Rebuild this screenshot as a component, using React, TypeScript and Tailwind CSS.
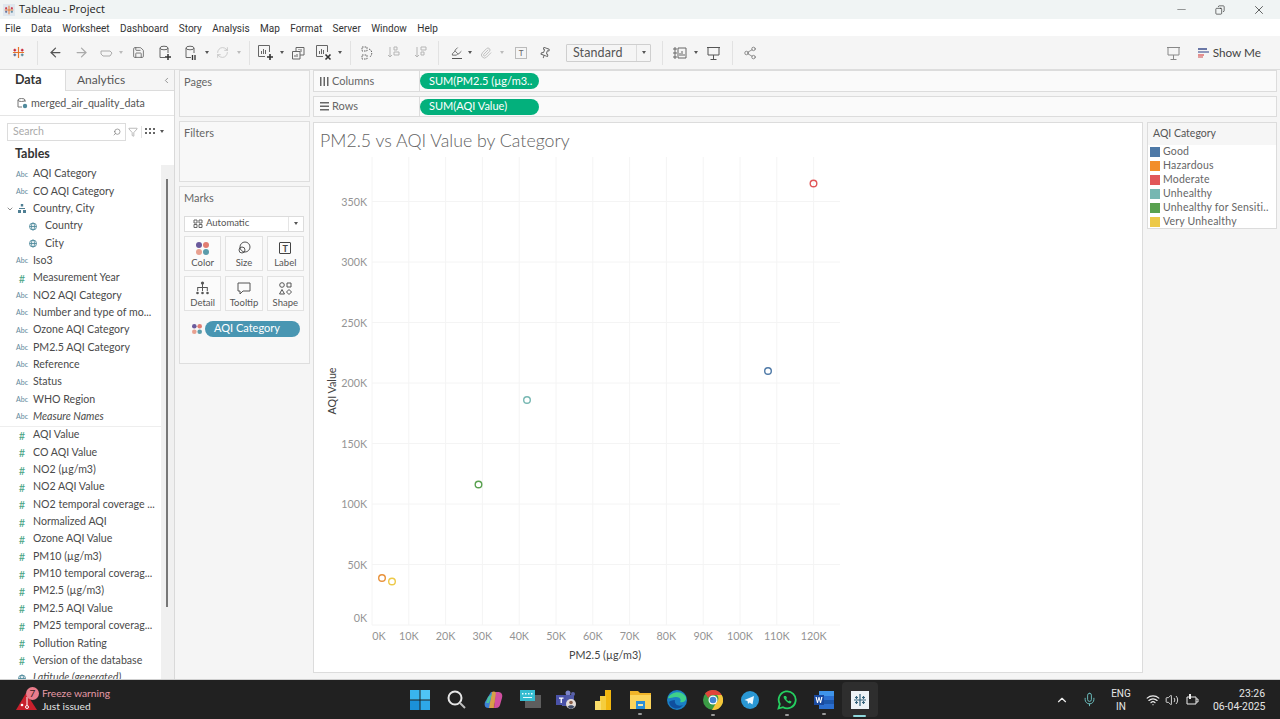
import React from "react";
import { Search, Filter, ChevronLeft, ChevronDown, ChevronUp, ArrowLeft, ArrowRight, Minus, X, Copy, Mic, Wifi, Volume2, Paperclip, Pin, Highlighter, Share2, RefreshCw, Save } from "lucide-react";

type Field = { name: string; kind: "abc" | "num" | "geo" | "hier"; indent?: boolean; italic?: boolean; caret?: boolean };

const dimensions: Field[] = [
  { name: "AQI Category", kind: "abc" },
  { name: "CO AQI Category", kind: "abc" },
  { name: "Country, City", kind: "hier", caret: true },
  { name: "Country", kind: "geo", indent: true },
  { name: "City", kind: "geo", indent: true },
  { name: "Iso3", kind: "abc" },
  { name: "Measurement Year", kind: "num" },
  { name: "NO2 AQI Category", kind: "abc" },
  { name: "Number and type of mo...", kind: "abc" },
  { name: "Ozone AQI Category", kind: "abc" },
  { name: "PM2.5 AQI Category", kind: "abc" },
  { name: "Reference", kind: "abc" },
  { name: "Status", kind: "abc" },
  { name: "WHO Region", kind: "abc" },
  { name: "Measure Names", kind: "abc", italic: true },
];

const measures: Field[] = [
  { name: "AQI Value", kind: "num" },
  { name: "CO AQI Value", kind: "num" },
  { name: "NO2 (µg/m3)", kind: "num" },
  { name: "NO2 AQI Value", kind: "num" },
  { name: "NO2 temporal coverage ...", kind: "num" },
  { name: "Normalized AQI", kind: "num" },
  { name: "Ozone AQI Value", kind: "num" },
  { name: "PM10 (µg/m3)", kind: "num" },
  { name: "PM10 temporal coverag...", kind: "num" },
  { name: "PM2.5 (µg/m3)", kind: "num" },
  { name: "PM2.5 AQI Value", kind: "num" },
  { name: "PM25 temporal coverag...", kind: "num" },
  { name: "Pollution Rating", kind: "num" },
  { name: "Version of the database", kind: "num" },
  { name: "Latitude (generated)", kind: "geo", italic: true },
];

const menus = ["File", "Data", "Worksheet", "Dashboard", "Story", "Analysis", "Map", "Format", "Server", "Window", "Help"];

const legend = [
  { name: "Good", color: "bg-[#4e79a7]" },
  { name: "Hazardous", color: "bg-[#f28e2b]" },
  { name: "Moderate", color: "bg-[#e15759]" },
  { name: "Unhealthy", color: "bg-[#76b7b2]" },
  { name: "Unhealthy for Sensiti..", color: "bg-[#59a14f]" },
  { name: "Very Unhealthy", color: "bg-[#edc948]" },
];

const marks = [
  { x: 768, y: 371, c: "#4e79a7" },
  { x: 382, y: 578, c: "#e8913a" },
  { x: 813.5, y: 183.5, c: "#e15759" },
  { x: 527, y: 400, c: "#76b7b2" },
  { x: 478.5, y: 484.5, c: "#59a14f" },
  { x: 392, y: 581.5, c: "#edc948" },
];

function FieldIcon({ kind }: { kind: Field["kind"] }) {
  if (kind === "abc") return <span className="text-[7px] leading-none text-[#5f8a9c] w-[14px] text-center">Abc</span>;
  if (kind === "num") return <span className="text-[11px] leading-none text-[#4aa585] w-[14px] text-center">#</span>;
  if (kind === "geo")
    return (
      <svg width="14" height="9" viewBox="0 0 14 9" fill="none" stroke="#4f8a9c" strokeWidth="0.9">
        <circle cx="7" cy="4.5" r="3.5" />
        <ellipse cx="7" cy="4.5" rx="1.5" ry="3.5" />
        <path d="M3.5 4.5h7" />
      </svg>
    );
  return (
    <svg width="14" height="9" viewBox="0 0 14 9" fill="#4f7f94">
      <path d="M5.8 0h2.4v2.5H5.8zM3 6h3v3H3zM8 6h3v3H8zM4 4h6v1H4z" />
    </svg>
  );
}

function FieldRow({ f }: { f: Field }) {
  return (
    <div className={`flex items-center h-[17.35px] whitespace-nowrap ${f.indent ? "pl-[26px]" : "pl-[15px]"}`}>
      {f.caret && <ChevronDown size={8} className="text-[#555] -ml-[9px] mr-[1px]" />}
      <FieldIcon kind={f.kind} />
      <span className={`${f.indent ? "ml-[5px]" : "ml-[4px]"} text-[10.6px] text-[#4a4a4a] ${f.italic ? "italic" : ""}`}>{f.name}</span>
    </div>
  );
}

function Caret({ off }: { off?: boolean }) {
  return <span className={`w-0 h-0 border-x-[2.5px] border-x-transparent border-t-[3px] ${off ? "border-t-[#bbb]" : "border-t-[#555]"}`} />;
}

function BarsIcon({ extra }: { extra: "plus" | "x" }) {
  return (
    <svg width="17" height="17" viewBox="0 0 17 17" fill="none" stroke="#666" strokeWidth="1">
      <path d="M12.5 8V1.5h-11v11H8" />
      <path d="M4.5 10V7M6.5 10V5M8.5 10V6" />
      {extra === "plus" ? <path d="M13 10v6M10 13h6" stroke="#333" strokeWidth="1.6" /> : <path d="M10.5 10.5l5 5M15.5 10.5l-5 5" stroke="#333" strokeWidth="1.6" />}
    </svg>
  );
}

function Cylinder({ extra }: { extra: "plus" | "pause" }) {
  return (
    <svg width="14" height="16" viewBox="0 0 14 16" fill="none" stroke="#666" strokeWidth="1">
      <ellipse cx="6" cy="3" rx="4" ry="1.8" />
      <path d="M2 3v9.5h5M10 3v5" />
      {extra === "plus" ? <path d="M10 9v6M7 12h6" stroke="#333" strokeWidth="1.5" /> : <path d="M8.5 10v5M11 10v5" stroke="#333" strokeWidth="1.3" />}
    </svg>
  );
}

function Screen({ stroke, className }: { stroke: string; className: string }) {
  return (
    <svg width="15" height="14" viewBox="0 0 15 14" fill="none" stroke={stroke} className={className}>
      <path d="M1 1.500h13M2 1.500v7.500h11V1.500M7.500 9v4M4.500 13.500h6" />
    </svg>
  );
}

function TableauLogo({ size = 13 }: { size?: number }) {
  return (
    <svg width={size} height={size} viewBox="0 0 14 14" fill="none" strokeWidth="1.3">
      <path d="M7 1v12M1 7h12" stroke="#e8762b" />
      <path d="M3 3v3M1.5 4.5h3M11 3v3M9.5 4.5h3" stroke="#c72035" />
      <path d="M3 8v3M1.5 9.5h3" stroke="#5b6591" />
      <path d="M11 8v3M9.5 9.5h3" stroke="#59879b" />
    </svg>
  );
}

function Toolbar() {
  return (
    <div className="flex items-center h-[34px] bg-[#f5f5f5] shrink-0 border-b border-[#dddddd] text-[#666]">
      <div className="ml-[12px] w-[13px] flex justify-center"><TableauLogo /></div>
      <div className="ml-[12px] w-px h-[24px] bg-[#e2e2e2]" />
      <ArrowLeft size={15} className="ml-[10px] text-[#555]" />
      <ArrowRight size={15} className="ml-[11px] text-[#aaa]" />
      <svg width="13" height="8" viewBox="0 0 13 8" fill="none" stroke="#aaa" className="ml-[11px]"><path d="M1 2h9l2 2-2 3H3L1 5z" /></svg>
      <span className="ml-[6px] flex"><Caret off /></span>
      <Save size={13} className="ml-[9px] text-[#555]" strokeWidth={1.4} />
      <span className="ml-[13px] flex"><Cylinder extra="plus" /></span>
      <span className="ml-[12px] flex"><Cylinder extra="pause" /></span>
      <span className="ml-[7px] flex"><Caret /></span>
      <RefreshCw size={13} className="ml-[7px] text-[#bbb]" strokeWidth={1.3} />
      <span className="ml-[8px] flex"><Caret off /></span>
      <div className="ml-[8px] w-px h-[24px] bg-[#e2e2e2]" />
      <span className="ml-[7px] flex"><BarsIcon extra="plus" /></span>
      <span className="ml-[6px] flex"><Caret /></span>
      <svg width="14" height="14" viewBox="0 0 14 14" fill="none" stroke="#666" className="ml-[7px]"><path d="M5 5V1.5h8V9H9M1.5 5.5H9V13H1.5z" /><path d="M4 11V9M6 11V8M8 4V3M10 6V3" /></svg>
      <span className="ml-[10px] flex"><BarsIcon extra="x" /></span>
      <span className="ml-[6px] flex"><Caret /></span>
      <div className="ml-[8px] w-px h-[24px] bg-[#e2e2e2]" />
      <svg width="13" height="14" viewBox="0 0 13 14" fill="none" stroke="#666" strokeDasharray="1.6 1" className="ml-[10px]"><path d="M1 1h5v4H1zM1 9h5v4H1zM8 3c3 1 4 5 1 8" /></svg>
      <svg width="13" height="13" viewBox="0 0 13 13" fill="none" stroke="#b5b5b5" className="ml-[13px]"><path d="M3 1v10M1 9l2 2 2-2M7 1h3v3H7zM7 6h5v3H7z" /></svg>
      <svg width="13" height="13" viewBox="0 0 13 13" fill="none" stroke="#b5b5b5" className="ml-[14px]"><path d="M3 1v10M1 9l2 2 2-2M7 1h5v3H7zM7 6h3v3H7z" /></svg>
      <div className="ml-[11px] w-px h-[24px] bg-[#e2e2e2]" />
      <span className="ml-[12px] flex flex-col items-center">
        <Highlighter size={11} className="text-[#666]" />
        <span className="w-[10px] h-px bg-[#555] mt-[1px]" />
      </span>
      <span className="ml-[6px] flex"><Caret /></span>
      <Paperclip size={12} className="ml-[8px] text-[#c0c0c0]" />
      <span className="ml-[8px] flex"><Caret off /></span>
      <span className="ml-[11px] w-[12px] h-[12px] border border-[#bbb] flex items-center justify-center text-[8px] leading-none text-[#666]">T</span>
      <Pin size={12} className="ml-[12px] text-[#666] rotate-[20deg]" />
      <div className="ml-[15px] flex items-center w-[85px] h-[18px] border border-[#cfcfcf] bg-[#f5f5f5] rounded-[1px]">
        <span className="ml-[6px] pt-[1px] flex-1 text-[12.5px] text-[#555] tracking-[0.1px]">Standard</span>
        <span className="w-[14px] h-full border-l border-[#dcdcdc] flex items-center justify-center"><Caret /></span>
      </div>
      <div className="ml-[11px] w-px h-[24px] bg-[#e2e2e2]" />
      <svg width="14" height="12" viewBox="0 0 14 12" fill="none" stroke="#666" className="ml-[10px]"><path d="M1 1h2v2H1zM1 5h2v2H1zM1 9h2v2H1zM5 1h8v10H5zM7 9V6M9 9V4M11 9V7" /></svg>
      <span className="ml-[7px] flex"><Caret /></span>
      <Screen stroke="#555" className="ml-[8px]" />
      <div className="ml-[11px] w-px h-[24px] bg-[#e2e2e2]" />
      <Share2 size={14} className="ml-[10px] text-[#666]" strokeWidth={1.2} />
      <div className="flex-1" />
      <Screen stroke="#888" className="mr-[1px]" />
      <svg width="11" height="10" viewBox="0 0 11 10" className="ml-[16px]"><path fill="#6a77a6" d="M0 0h9v2H0z" /><path fill="#8f99bd" d="M0 3h11v2H0z" /><path fill="#e58f8f" d="M0 6h6v2H0z" /><path fill="#e0a0a0" d="M0 8h5v2H0z" /></svg>
      <span className="ml-[4px] mr-[19px] pt-[1px] text-[11.75px] text-[#444]">Show Me</span>
    </div>
  );
}

function DataPane() {
  return (
    <div className="w-[175px] shrink-0 bg-white border-r border-[#d9d9d9] flex flex-col overflow-hidden">
      <div className="flex h-[21px] shrink-0 text-[12px]">
        <div className="w-[65px] flex items-center pl-[15px] text-[12.5px] font-bold text-[#333]">Data</div>
        <div className="flex-1 flex items-center pl-[11px] bg-[#f5f5f5] border-l border-b border-[#dcdcdc] text-[#555]">
          Analytics
          <ChevronLeft size={9} className="ml-auto mr-[3px] text-[#777]" />
        </div>
      </div>
      <div className="flex items-center h-[25px] shrink-0 border-b border-[#e5e5e5] pl-[17px] text-[10.7px] text-[#555]">
        <svg width="11" height="11" viewBox="0 0 11 11" fill="none" stroke="#777" className="mr-[3px]">
          <ellipse cx="4.5" cy="2" rx="3.5" ry="1.5" />
          <path d="M1 2v7h4M8 2v2" />
          <circle cx="8" cy="8" r="2.2" fill="#4f8a9c" stroke="none" />
        </svg>
        merged_air_quality_data
      </div>
      <div className="flex items-center h-[31px] shrink-0 pl-[7px]">
        <div className="flex items-center w-[119px] h-[18px] border border-[#dcdcdc] pl-[5px] pr-[4px] text-[10.5px] text-[#aaa]">
          Search
          <Search size={8} className="ml-auto text-[#777] -scale-x-100" />
        </div>
        <Filter size={10} className="ml-[2px] text-[#777]" strokeWidth={1.2} />
        <span className="ml-[3px] w-px h-[12px] bg-[#e2e2e2]" />
        <svg width="10" height="7" viewBox="0 0 10 7" fill="#666" className="ml-[3px]"><path d="M0 0h2v2H0zM4 0h2v2H4zM8 0h2v2H8zM0 4h2v2H0zM4 4h2v2H4zM8 4h2v2H8z" /></svg>
        <span className="ml-[5px] flex"><Caret /></span>
      </div>
      <div className="flex flex-1 min-h-0">
        <div className="w-[161px] shrink-0">
          <div className="h-[18.5px] pl-[15px] pb-[4px] flex items-center text-[12.5px] font-bold text-[#333]">Tables</div>
          {dimensions.map((f) => (
            <FieldRow key={f.name} f={f} />
          ))}
          <div className="h-px bg-[#eeeeee]" />
          {measures.map((f) => (
            <FieldRow key={f.name} f={f} />
          ))}
        </div>
        <div className="flex-1 mt-[18px] bg-[#f0f0f0] pl-[5px]">
          <div className="w-[2px] h-[428px] mt-[14px] bg-[#777]" />
        </div>
      </div>
    </div>
  );
}

function Card({ title, className, children }: { title: string; className: string; children?: React.ReactNode }) {
  return (
    <div className={`bg-[#f8f8f8] border border-[#dedede] pl-[4px] pt-[3px] text-[11px] text-[#666] ${className}`}>
      {title}
      {children}
    </div>
  );
}

function MarkTile({ label, children }: { label: string; children: React.ReactNode }) {
  return (
    <div className="h-[35px] bg-[#fbfbfb] border border-[#e2e2e2] flex flex-col items-center justify-between pt-[4px] pb-[2px] text-[9.5px] leading-none text-[#555]">
      <div className="h-[15px] flex items-center">{children}</div>
      {label}
    </div>
  );
}

function ColorDots({ s = 6 }: { s?: number }) {
  return (
    <svg width={s * 2 + 1} height={s * 2 + 1} viewBox="0 0 13 13">
      <circle cx="3" cy="3" r="3" fill="#6a5a9c" />
      <circle cx="10" cy="3" r="3" fill="#e27d72" />
      <circle cx="3" cy="10" r="3" fill="#e8a08f" />
      <circle cx="10" cy="10" r="3" fill="#5b9cab" />
    </svg>
  );
}

function SideCards() {
  return (
    <div className="w-[131px] ml-[4px] shrink-0 flex flex-col gap-[4px]">
      <Card title="Pages" className="h-[47px]" />
      <Card title="Filters" className="h-[61px]" />
      <Card title="Marks" className="h-[178px]">
        <div className="mt-[9px] mr-[5px] h-[16px] flex items-center bg-white border border-[#dcdcdc] pl-[8px] text-[9.5px] text-[#555]">
          <svg width="10" height="9" viewBox="0 0 10 9" fill="none" stroke="#666" className="mr-[3px]"><path d="M1 1h3v3H1zM6 1h3v3H6zM1 5.5h3v3H1zM6 5.5h3v3H6z" /></svg>
          Automatic
          <span className="ml-auto w-[15px] h-full border-l border-[#e5e5e5] flex items-center justify-center"><Caret /></span>
        </div>
        <div className="mt-[4px] mr-[5px] grid grid-cols-3 gap-x-[4px] gap-y-[5px]">
          <MarkTile label="Color"><ColorDots /></MarkTile>
          <MarkTile label="Size">
            <svg width="14" height="14" viewBox="0 0 14 14" fill="none" stroke="#555"><circle cx="8" cy="6" r="5" /><circle cx="5" cy="9" r="3" /></svg>
          </MarkTile>
          <MarkTile label="Label">
            <span className="w-[12px] h-[12px] border border-[#444] rounded-[1px] flex items-center justify-center text-[9px] font-bold leading-none text-[#444]">T</span>
          </MarkTile>
          <MarkTile label="Detail">
            <svg width="13" height="14" viewBox="0 0 13 14" fill="#555"><circle cx="6.5" cy="2" r="1.6" /><circle cx="1.5" cy="12" r="1.3" /><circle cx="6.5" cy="12" r="1.3" /><circle cx="11.5" cy="12" r="1.3" /><path d="M6 3h1v3h4.8v4h-1V7H7v3H6V7H2.200v3h-1V6H6z" /></svg>
          </MarkTile>
          <MarkTile label="Tooltip">
            <svg width="14" height="13" viewBox="0 0 14 13" fill="none" stroke="#555"><path d="M1 1h12v8H6l-3 3V9H1z" /></svg>
          </MarkTile>
          <MarkTile label="Shape">
            <svg width="13" height="13" viewBox="0 0 13 13" fill="none" stroke="#555"><circle cx="3" cy="3" r="2.300" /><path d="M8 1h4v4H8zM3 7.500l2.500 4.500h-5zM10 7.500l2.500 2.500-2.500 2.500-2.500-2.500z" /></svg>
          </MarkTile>
        </div>
        <div className="mt-[10px] flex items-center">
          <span className="ml-[8px] flex"><ColorDots s={4.500} /></span>
          <span className="ml-[3px] w-[95px] h-[16px] rounded-full bg-[#4996b2] pl-[9px] flex items-center text-[11px] text-white">AQI Category</span>
        </div>
      </Card>
    </div>
  );
}

function Shelf({ label, pill, icon, className }: { label: string; pill: string; icon: React.ReactNode; className: string }) {
  return (
    <div className={`bg-[#fafafa] border border-[#dcdcdc] flex items-center text-[11px] text-[#666] ${className}`}>
      <span className="w-[13px] ml-[4px] flex justify-center">{icon}</span>
      <span className="ml-[1px] w-[87px]">{label}</span>
      <span className="self-stretch w-px bg-[#dcdcdc]" />
      <span className="w-[119px] h-[16px] rounded-full bg-[#03b07c] pl-[9px] flex items-center text-[11px] text-white">{pill}</span>
    </div>
  );
}

function Chart() {
  const xs = [372, 408.8, 445.6, 482.4, 519.2, 556, 592.8, 629.6, 666.4, 703.2, 740, 776.8, 813.6];
  const ys = [625, 564.5, 504, 443.5, 383, 322.5, 262, 201.5];
  return (
    <svg width="828" height="522" viewBox="314 150 828 522" className="block">
      <g stroke="#f4f4f4" strokeWidth="1">
        {xs.map((x) => (
          <line key={x} x1={x} x2={x} y1={157} y2={625} />
        ))}
        {ys.map((y) => (
          <line key={y} x1={372} x2={840} y1={y} y2={y} />
        ))}
      </g>
      <g fontFamily="Lato, sans-serif" fontSize="10.75" fill="#949494">
        {["50K", "100K", "150K", "200K", "250K", "300K", "350K"].map((t, i) => (
          <text key={t} x={367} y={ys[i + 1] + 4} textAnchor="end">{t}</text>
        ))}
        <text x={367} y={621.5} textAnchor="end">0K</text>
        {["0K", "10K", "20K", "30K", "40K", "50K", "60K", "70K", "80K", "90K", "100K", "110K", "120K"].map((t, i) => (
          <text key={t} x={i === 0 ? 379 : xs[i]} y={640} textAnchor="middle">{t}</text>
        ))}
      </g>
      <text x={605} y={659} textAnchor="middle" fontFamily="Lato, sans-serif" fontSize="10.75" fill="#444">PM2.5 (µg/m3)</text>
      <text x={0} y={0} transform="translate(336 391) rotate(-90)" textAnchor="middle" fontFamily="Lato, sans-serif" fontSize="10.75" fill="#444">AQI Value</text>
      {marks.map((m) => (
        <circle key={m.x} cx={m.x} cy={m.y} r="3.3" fill="none" stroke={m.c} strokeWidth="1.4" />
      ))}
    </svg>
  );
}

function Workspace() {
  return (
    <div className="flex-1 ml-[3px] mr-[3px] min-w-0 flex flex-col gap-[4px]">
      <Shelf
        label="Columns"
        pill="SUM(PM2.5 (µg/m3.."
        className="h-[22px]"
        icon={<svg width="9" height="9" viewBox="0 0 9 9" fill="#666"><path d="M0 0h1.500v9H0zM3.500 0H5v9H3.500zM7 0h1.500v9H7z" /></svg>}
      />
      <Shelf
        label="Rows"
        pill="SUM(AQI Value)"
        className="h-[21px]"
        icon={<svg width="9" height="9" viewBox="0 0 9 9" fill="#666"><path d="M0 0h9v1.500H0zM0 3.500h9V5H0zM0 7h9v1.500H0z" /></svg>}
      />
      <div className="flex gap-[4px] mt-[1px] flex-1 min-h-0">
        <div className="w-[830px] h-[551px] bg-white border border-[#dcdcdc]">
          <div className="h-[27px] pl-[6px] pt-[5px] text-[17.75px] leading-[24px] text-[#626262] font-light whitespace-nowrap">PM2.5 vs AQI Value by Category</div>
          <Chart />
        </div>
        <div className="w-[130px] h-[107px] bg-white border border-[#dcdcdc] self-start">
          <div className="h-[22px] bg-[#f6f6f6] pl-[5px] flex items-center text-[10.5px] text-[#555]">AQI Category</div>
          {legend.map((l) => (
            <div key={l.name} className="flex items-center h-[14px] pl-[2px] text-[10.5px] text-[#666] tracking-[0.2px] whitespace-nowrap">
              <span className={`w-[10px] h-[10px] mr-[3px] ${l.color}`} />
              {l.name}
            </div>
          ))}
        </div>
      </div>
    </div>
  );
}

function Taskbar() {
  return (
    <div className="h-[39px] shrink-0 bg-[#212121] flex items-center relative text-white">
      <div className="flex items-center w-[110px]">
        <div className="ml-[16px] w-[24px] h-[24px] relative">
          <svg width="22" height="22" viewBox="0 0 22 22" className="absolute left-0 top-[3px]"><path d="M10 2L21 19H0z" fill="#c9202c" /><circle cx="6" cy="14" r="1.300" fill="#fff" /><circle cx="11" cy="16" r="1.500" fill="none" stroke="#fff" /><path d="M11 6v8" stroke="#fff" /></svg>
          <span className="absolute left-[10px] -top-[1px] w-[13px] h-[13px] rounded-full bg-[#ea7c8b] text-[10px] leading-[13px] text-center text-[#3a2020]">7</span>
        </div>
        <div className="ml-[2px] text-[10.25px] leading-[13px] whitespace-nowrap">
          <div className="text-[#e59aa6]">Freeze warning</div>
          <div className="text-[#e3e3e3]">Just issued</div>
        </div>
      </div>
      <div className="ml-[291.6px] flex items-center">
        <span className="w-[36.7px] flex justify-center">
          <svg width="20" height="20" viewBox="0 0 20 20"><path d="M0 0h9.500v9.500H0z" fill="#39b4ee" /><path d="M10.500 0H20v9.500h-9.500z" fill="#4fc4f5" /><path d="M0 10.500h9.500V20H0z" fill="#1b90d8" /><path d="M10.500 10.500H20V20h-9.500z" fill="#2ea8e8" /></svg>
        </span>
        <span className="w-[36.7px] flex justify-center">
          <svg width="19" height="19" viewBox="0 0 19 19" fill="none" stroke="#e6e6e6" strokeWidth="2"><circle cx="8" cy="8" r="6.500" /><path d="M13 13l5 5" stroke="#bdbdbd" /></svg>
        </span>
        <span className="w-[36.7px] flex justify-center">
          <svg width="19" height="18" viewBox="0 0 19 18"><path d="M7 1h5l-3 16H4C1 17 0 14 1 11z" fill="#3d7fd6" /><path d="M8 1c3-1 4 0 4.500 2L10 17H5z" fill="#e8a33a" opacity=".9" /><path d="M12 1h2c3 0 5 2 4 6l-2 7c-1 3-3 3-6 3z" fill="#d14fa0" /><path d="M4 6l4-3-3 9H2z" fill="#49c0a0" /></svg>
        </span>
        <span className="w-[36.7px] flex justify-center">
          <svg width="21" height="19" viewBox="0 0 21 19"><path d="M5 5h16v13H5z" fill="#5e5e5e" /><path d="M0 0h15v11H0z" fill="#35bcd0" /><path d="M2 3h1.500v1.500H2zM5 3h1.500v1.500H5zM8 3h1.500v1.500H8zM11 3h1.500v1.500H11zM3 7h9v1H3z" fill="#e8fbff" /></svg>
        </span>
        <span className="w-[36.7px] flex justify-center">
          <svg width="21" height="19" viewBox="0 0 21 19"><circle cx="12" cy="3" r="2.500" fill="#7b83c9" /><circle cx="17" cy="4" r="2" fill="#5b62a8" /><path d="M6 5h12v11H6z" fill="#5059a8" /><path d="M0 5h10v10H0z" fill="#4a52a8" /><path d="M3 7.500h4.500v1.200H5.900V13H4.600V8.700H3z" fill="#fff" /><circle cx="15" cy="14" r="5" fill="#e5ddd8" /><circle cx="15" cy="12.500" r="1.800" fill="#8b5f48" /><path d="M11.500 17c1-2.500 6-2.500 7 0l-3.500 2z" fill="#3e4a66" /></svg>
        </span>
        <span className="w-[36.7px] flex justify-center">
          <svg width="16" height="20" viewBox="0 0 16 20"><path d="M10 0h6v20h-6z" fill="#f2b70f" /><path d="M5 6h6v14H5z" fill="#f5cd3d" /><path d="M0 11h6v9H0z" fill="#fadd6a" /></svg>
        </span>
        <span className="w-[36.7px] flex justify-center relative">
          <svg width="21" height="18" viewBox="0 0 21 18"><path d="M0 0h8l2 2h11v16H0z" fill="#f0b429" /><path d="M0 4h21v14H0z" fill="#fbd45b" /><path d="M6 10h9v8H6z" fill="#2a8fd8" /><path d="M8 13h5v2H8z" fill="#f5e6a8" /></svg>
          <span className="absolute -bottom-[6px] w-[4px] h-[2px] rounded-full bg-[#9a9a9a]" />
        </span>
        <span className="w-[36.7px] flex justify-center">
          <svg width="20" height="20" viewBox="0 0 20 20"><circle cx="10" cy="10" r="10" fill="#1b7fc4" /><path d="M1 8c2-6 14-9 18-1 1 4-3 6-6 5 2-3-1-5-4-5-4 0-7 2-8 1z" fill="#3fd08a" /><path d="M8 10c-1 4 3 7 8 5-4 6-13 4-14-3 1-1 3-2 6-2z" fill="#0f4f9e" /></svg>
        </span>
        <span className="w-[36.7px] flex justify-center relative">
          <svg width="20" height="20" viewBox="0 0 20 20"><circle cx="10" cy="10" r="10" fill="#3b9b45" /><path d="M10 0a10 10 0 0 1 8.700 5H10a5 5 0 0 0-4.700 3L2 3.300A10 10 0 0 1 10 0z" fill="#e0443a" /><path d="M18.700 5A10 10 0 0 1 9 20l4.300-7.500A5 5 0 0 0 14 5z" fill="#f5c63a" /><circle cx="10" cy="10" r="4.500" fill="#fff" /><circle cx="10" cy="10" r="3.300" fill="#4285d4" /></svg>
          <span className="absolute -bottom-[6px] w-[4px] h-[2px] rounded-full bg-[#9a9a9a]" />
        </span>
        <span className="w-[36.7px] flex justify-center">
          <svg width="18" height="18" viewBox="0 0 18 18"><circle cx="9" cy="9" r="9" fill="#2a97d4" /><path d="M3.500 9L13 5l-1.500 8.500-3-2L7 13l-.5-3z" fill="#eef8ff" /></svg>
        </span>
        <span className="w-[36.7px] flex justify-center relative">
          <svg width="20" height="20" viewBox="0 0 20 20" fill="none"><path d="M1.500 18.500l1.300-4.500a8.500 8.500 0 1 1 3.200 3.200z" stroke="#25cf60" strokeWidth="1.800" /><path d="M7 6c-1 1 0 3 2 5s4 3 5 2l.5-1.500-2-1-1 .8c-1-.5-1.800-1.300-2.300-2.300l.8-1-1-2z" fill="#25cf60" /></svg>
          <span className="absolute -bottom-[6px] w-[4px] h-[2px] rounded-full bg-[#9a9a9a]" />
        </span>
        <span className="w-[36.7px] flex justify-center relative">
          <svg width="20" height="18" viewBox="0 0 20 18"><path d="M5 0h15v18H5z" fill="#2b6fd0" /><path d="M5 0h15v5H5z" fill="#3f94ea" /><path d="M5 9h15v4H5z" fill="#1d58ac" /><path d="M0 4h10v10H0z" fill="#1a4aa0" /><path d="M1.500 6h1.300l.8 4 .9-4h1l.9 4 .8-4h1.300l-1.500 6H6l-1-4-1 4H3z" fill="#fff" /></svg>
          <span className="absolute -bottom-[6px] w-[4px] h-[2px] rounded-full bg-[#9a9a9a]" />
        </span>
        <span className="w-[36px] h-[35px] bg-[#2e2e2e] rounded-[4px] flex justify-center items-center relative">
          <span className="w-[18px] h-[18px] bg-[#eef3f6] flex items-center justify-center">
            <svg width="14" height="14" viewBox="0 0 14 14" fill="none" stroke="#34627a" strokeWidth="1.200"><path d="M7 1v12M1 7h12M3.500 3v3M2 4.500h3M10.500 3v3M9 4.500h3M3.500 8v3M2 9.500h3M10.500 8v3M9 9.500h3" /></svg>
          </span>
          <span className="absolute bottom-0 w-[13px] h-[2px] rounded-full bg-[#8fd8dc]" />
        </span>
      </div>
      <div className="ml-auto flex items-center font-['Roboto',sans-serif]">
        <ChevronUp size={14} className="text-[#eeeeee]" />
        <Mic size={15} className="ml-[12.5px] text-[#6fc4c4]" strokeWidth={1.5} />
        <div className="ml-[9.5px] w-[30px] text-center text-[10px] leading-[13px] text-[#e6e6e6]">ENG<br />IN</div>
        <Wifi size={14} className="ml-[10px] text-[#eeeeee]" />
        <Volume2 size={14} className="ml-[5px] text-[#eeeeee]" strokeWidth={1.5} />
        <svg width="14" height="13" viewBox="0 0 14 13" fill="none" stroke="#eee" className="ml-[6px]"><path d="M2 4h9v7H2zM11 6h2v3h-2" /><path d="M4 1v5h2V1z" fill="#eee" stroke="none" /></svg>
        <div className="ml-[14px] mr-[15px] w-[52px] text-right text-[10.4px] leading-[13px] text-[#e6e6e6] whitespace-nowrap">23:26<br />06-04-2025</div>
      </div>
    </div>
  );
}

export default function App() {
  return (
    <div className="w-[1280px] h-[719px] overflow-hidden flex flex-col bg-[#f5f5f5] font-['Lato',sans-serif]">
      <div className="h-[19px] shrink-0 bg-[#f0f4f4] flex items-center font-['Open_Sans',sans-serif] text-[11px] text-[#222]">
        <span className="ml-[3px] w-[12px] h-[12px] bg-[#dfe7ee] flex items-center justify-center"><TableauLogo size={10} /></span>
        <span className="ml-[4px]">Tableau - Project</span>
        <Minus size={13} className="ml-auto text-[#444]" strokeWidth={1} />
        <Copy size={10} className="ml-[27px] text-[#222] -scale-x-100" strokeWidth={1.5} />
        <X size={14} className="ml-[27px] mr-[14px] text-[#222]" strokeWidth={1.2} />
      </div>
      <div className="h-[17px] shrink-0 bg-white flex items-center pt-[2px] pl-[5px] gap-[10.4px] font-['Roboto',sans-serif] text-[10px] text-[#333]">
        {menus.map((m) => (
          <span key={m}>{m}</span>
        ))}
      </div>
      <Toolbar />
      <div className="flex-1 min-h-0 flex border-b border-[#cfcfcf]">
        <DataPane />
        <SideCards />
        <Workspace />
      </div>
      <Taskbar />
    </div>
  );
}
